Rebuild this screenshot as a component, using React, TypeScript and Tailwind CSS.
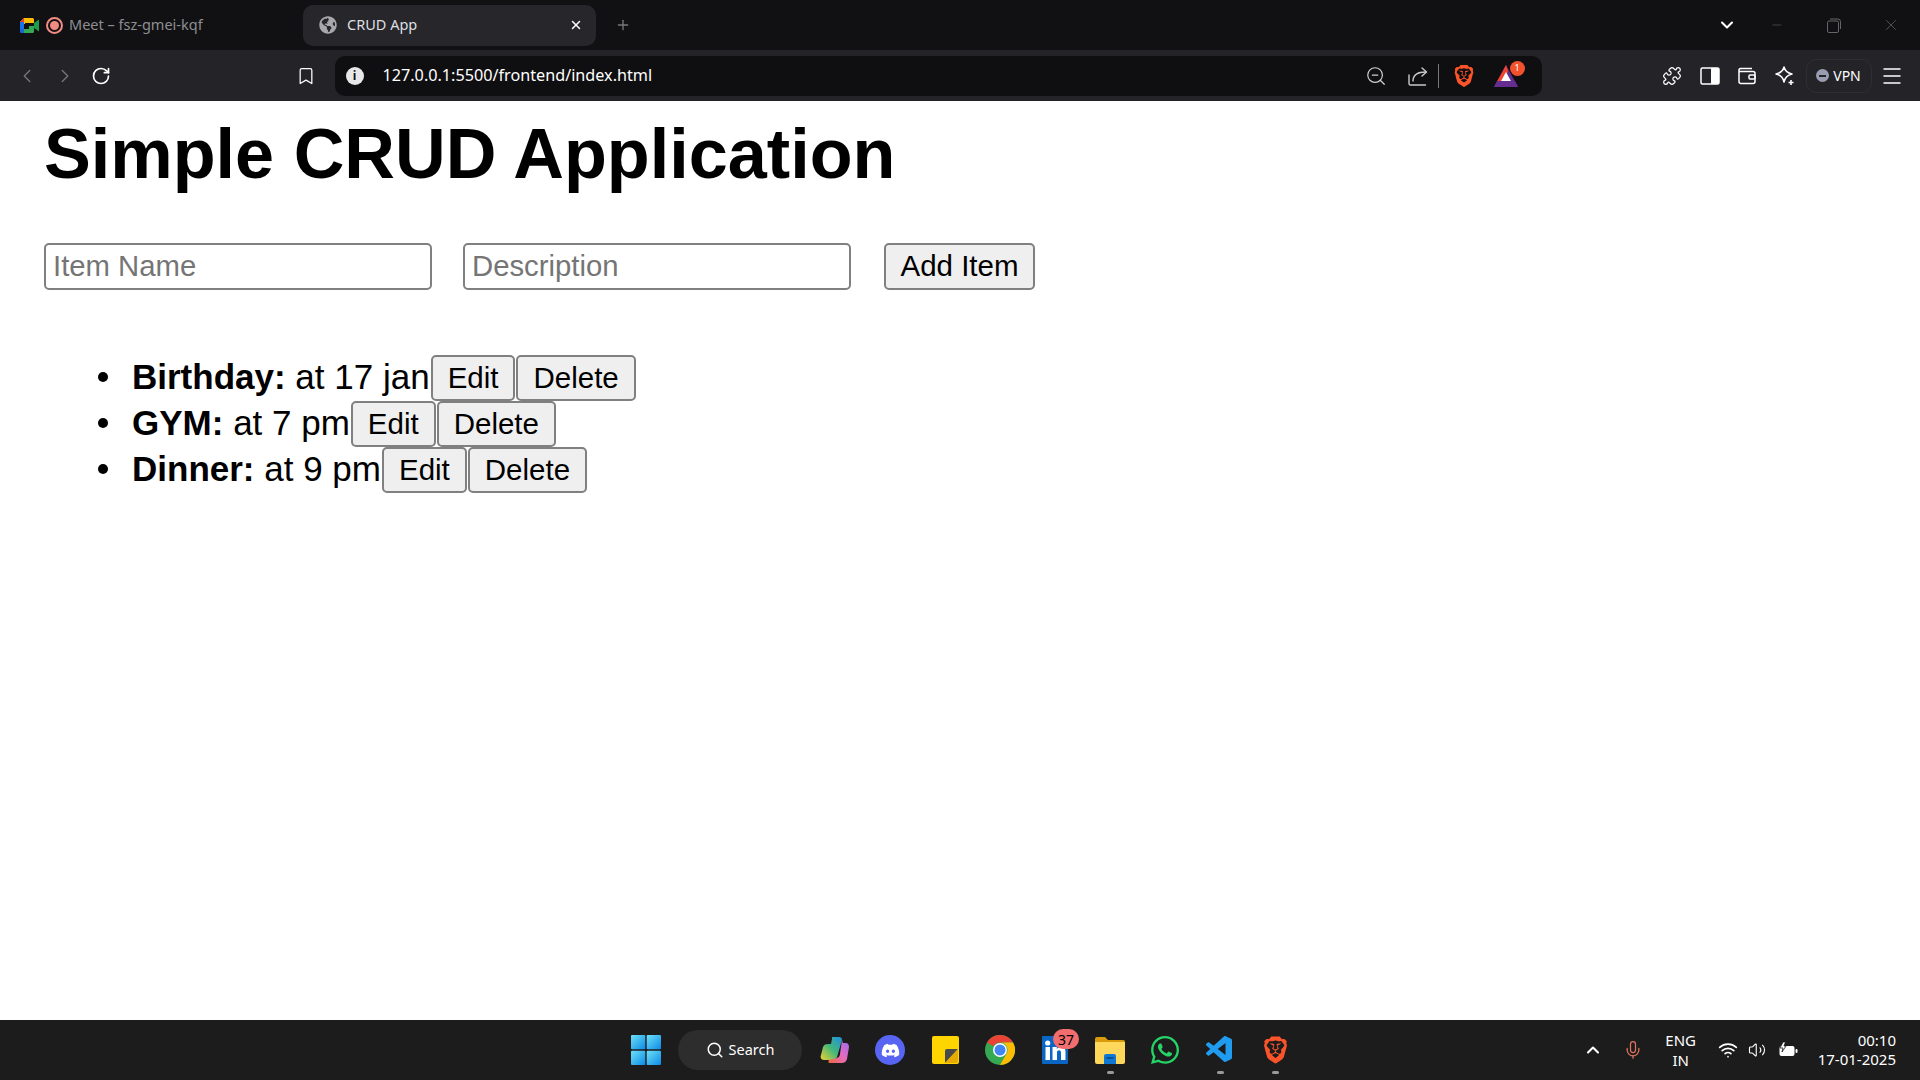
import React from "react";
import { ChevronLeft, ChevronRight, RotateCw, Bookmark, X, Plus, ChevronDown, Minus, ZoomOut, Puzzle, Menu, Search, ChevronUp, Mic, Wifi, Volume2 } from "lucide-react";
import { FaDiscord, FaWhatsapp, FaGlobeAmericas } from "react-icons/fa";
import { SiBrave } from "react-icons/si";
import { VscVscode } from "react-icons/vsc";

const ui = { fontFamily: '"Noto Sans", "Open Sans", sans-serif' };

function MeetIcon() {
  return (
    <svg width="19" height="15" viewBox="0 0 19 15">
      <path d="M4 0h8.500a1.500 1.500 0 0 1 1.500 1.500V5H5v1H0V4z" fill="#fbbc04" />
      <path d="M4 0v4H0z" fill="#ea4335" />
      <path d="M0 4h4v7H0z" fill="#1a73e8" />
      <path d="M0 11h4v4H1.500A1.500 1.500 0 0 1 0 13.500z" fill="#1967d2" />
      <path d="M4 11h5V8h5v5.500a1.500 1.500 0 0 1-1.500 1.500H4z" fill="#34a853" />
      <path d="M14 5l5-3.500v12L14 10z" fill="#1e9e4a" />
    </svg>
  );
}

function Rewards() {
  return (
    <svg width="24" height="24" viewBox="0 0 24 24">
      <path d="M12 1L0 23h24z" fill="#662d91" />
      <path d="M12 1L3 17.500h7L14 7z" fill="#f0442c" />
      <path d="M12 8l5.500 10h-11z" fill="#ffffff" />
      <path d="M0 23l3-6h18l3 6z" fill="#662d91" />
    </svg>
  );
}

function ShareIcon() {
  return (
    <svg width="20" height="20" viewBox="0 0 20 20" fill="none" stroke="#c9c9cc" strokeWidth="1.400" strokeLinecap="round" strokeLinejoin="round">
      <path d="M1 9v8.500a1.500 1.500 0 0 0 1.500 1.500h15" />
      <path d="M5 15c0-6 3.500-9 13-9" />
      <path d="M14 2l4.500 4-4.500 4" />
    </svg>
  );
}

function SidebarIcon() {
  return (
    <svg width="20" height="20" viewBox="0 0 20 20">
      <rect x="1" y="2" width="18" height="16" rx="1.500" fill="none" stroke="#fff" strokeWidth="1.500" />
      <rect x="11" y="2" width="8" height="16" fill="#fff" />
    </svg>
  );
}

function WalletIcon() {
  return (
    <svg width="20" height="20" viewBox="0 0 20 20" fill="none" stroke="#fff" strokeWidth="1.500">
      <path d="M15 2.500H3.500A1.800 1.800 0 0 0 2 4.500v11A2 2 0 0 0 4 17.500h12a2 2 0 0 0 2-2v-8a2 2 0 0 0-2-2H2.500" />
      <rect x="12" y="9" width="6" height="4" rx="1" />
    </svg>
  );
}

function LeoIcon() {
  return (
    <svg width="22" height="22" viewBox="0 0 22 22" fill="none" stroke="#fff" strokeWidth="1.500" strokeLinejoin="round">
      <path d="M10 2c1 4 3.500 6 8 7-4.500 1-7 3-8 8-1-5-3.500-7-8-8 4.500-1 7-3 8-7z" />
      <path d="M17 15v5M14.500 17.500h5" strokeWidth="1.600" />
    </svg>
  );
}

function WinLogo() {
  return (
    <svg width="30" height="30" viewBox="0 0 30 30">
      <defs>
        <linearGradient id="wl" x1="0" y1="0" x2="1" y2="1">
          <stop offset="0" stopColor="#6fe0f5" />
          <stop offset="1" stopColor="#0b8be8" />
        </linearGradient>
      </defs>
      <rect x="0" y="0" width="14.300" height="14.300" rx="1" fill="url(#wl)" />
      <rect x="15.700" y="0" width="14.300" height="14.300" rx="1" fill="url(#wl)" />
      <rect x="0" y="15.700" width="14.300" height="14.300" rx="1" fill="url(#wl)" />
      <rect x="15.700" y="15.700" width="14.300" height="14.300" rx="1" fill="url(#wl)" />
    </svg>
  );
}

function Copilot() {
  return (
    <svg width="30" height="28" viewBox="0 0 30 28">
      <defs>
        <linearGradient id="c1" x1="0" y1="1" x2="1" y2="0">
          <stop offset="0" stopColor="#f2d22e" />
          <stop offset="0.5" stopColor="#42b87a" />
          <stop offset="1" stopColor="#1f8fe0" />
        </linearGradient>
        <linearGradient id="c2" x1="0" y1="1" x2="1" y2="0">
          <stop offset="0" stopColor="#f0683a" />
          <stop offset="0.5" stopColor="#e66bc0" />
          <stop offset="1" stopColor="#9a6cf0" />
        </linearGradient>
      </defs>
      <path d="M12 1h7c2 0 3 1 3 3l-5 17c-1 2-2 3-4 3H4c-3 0-4-3-3-5l2-8c1-2 2-3 5-3h3l1-5c0-1 0-2 0-2z" fill="url(#c1)" />
      <path d="M22 4c1 3 0 0 1 3h3c2 0 3 2 3 4l-2 12c-1 3-3 4-5 4H10c-2 0-2-1-1-3l8-2c2-1 3-2 3-4z" fill="url(#c2)" />
    </svg>
  );
}

function Sticky() {
  return (
    <svg width="27" height="28" viewBox="0 0 27 28">
      <rect width="27" height="28" rx="2" fill="#ffd500" />
      <path d="M26 13H15a2 2 0 0 0-2 2v12z" fill="#4a4a4a" />
      <path d="M26 13v12a2 2 0 0 1-2 2H13z" fill="#e8a900" />
    </svg>
  );
}

function Chrome() {
  return (
    <svg width="30" height="30" viewBox="0 0 30 30">
      <circle cx="15" cy="15" r="15" fill="#34a853" />
      <path d="M15 0a15 15 0 0 1 13 7.500H15a7.500 7.500 0 0 0-6.500 3.750L2 7.500A15 15 0 0 1 15 0z" fill="#ea4335" />
      <path d="M28 7.500A15 15 0 0 1 15 30l6.500-11.250A7.500 7.500 0 0 0 15 7.500z" fill="#fbbc04" />
      <circle cx="15" cy="15" r="7" fill="#fff" />
      <circle cx="15" cy="15" r="5.500" fill="#4285f4" />
    </svg>
  );
}

function Linkedin() {
  return (
    <svg width="26" height="28" viewBox="0 0 26 28">
      <rect width="26" height="28" rx="1" fill="#0a66c2" />
      <rect x="3.500" y="11" width="4.500" height="13" fill="#fff" />
      <circle cx="5.700" cy="7" r="2.600" fill="#fff" />
      <path d="M10.500 11h4.300v2c1-1.500 2.500-2.300 4.300-2.300 3.300 0 4.400 2.200 4.400 5.300v8h-4.500v-7c0-1.700-.5-2.700-1.900-2.700-1.500 0-2.100 1.100-2.100 2.700v7h-4.500z" fill="#fff" />
    </svg>
  );
}

function Folder() {
  return (
    <svg width="30" height="28" viewBox="0 0 30 28">
      <path d="M0 3a2 2 0 0 1 2-2h8l3 3h15a2 2 0 0 1 2 2v4H0z" fill="#d99b0b" />
      <path d="M0 6h30v20a2 2 0 0 1-2 2H2a2 2 0 0 1-2-2z" fill="#ffd75a" />
      <path d="M9 20a2 2 0 0 1 2-2h8a2 2 0 0 1 2 2v8H9z" fill="#0f78d4" />
      <rect x="11.500" y="21" width="7" height="2" fill="#0b4f8c" />
    </svg>
  );
}

function Battery() {
  return (
    <svg width="20" height="16" viewBox="0 0 20 16">
      <rect x="1.500" y="4" width="15" height="10" rx="2" fill="#fff" />
      <rect x="17.500" y="7" width="2" height="4" rx="1" fill="#fff" />
      <path d="M5 0L2 6h3l-1 4 4-6H6l1.500-4z" fill="#fff" stroke="#1c1c1c" strokeWidth="0.800" />
    </svg>
  );
}

function TaskIcon({ children, dot }: { children: React.ReactNode; dot?: boolean }) {
  return (
    <div className="relative flex h-[60px] w-[55px] shrink-0 items-center justify-center">
      {children}
      {dot && <span className="absolute bottom-[6px] h-[3px] w-[7px] rounded-full bg-[#9a9a9a]" />}
    </div>
  );
}

function Row({ label, text }: { label: string; text: string }) {
  return (
    <li className="relative h-[46px] leading-[43px] before:absolute before:-left-[34px] before:top-[17px] before:h-[10px] before:w-[10px] before:rounded-full before:bg-black before:content-['']">
      <strong>{label}</strong> {text}
      <button className="ml-[1px] h-[46px] rounded-[5px] border-2 border-[#808080] bg-[#efefef] px-[15px] align-top text-[29.500px] leading-none">Edit</button>
      <button className="ml-[1px] h-[46px] rounded-[5px] border-2 border-[#808080] bg-[#efefef] px-[15px] align-top text-[29.500px] leading-none">Delete</button>
    </li>
  );
}

export default function App() {
  return (
    <div className="flex h-screen w-full flex-col overflow-hidden bg-white">
      <header style={ui} className="flex h-[50px] shrink-0 items-center bg-[#111113] text-[14.500px] text-[#8e8e91]">
        <div className="flex w-[303px] shrink-0 items-center pl-[20px]">
          <MeetIcon />
          <span className="ml-[7px] flex h-[17px] w-[17px] items-center justify-center rounded-full border-[2px] border-[#f28b82]">
            <span className="h-[9px] w-[9px] rounded-full bg-[#f28b82]" />
          </span>
          <span className="ml-[6px]">Meet – fsz-gmei-kqf</span>
        </div>
        <div className="flex h-[41px] w-[293px] shrink-0 items-center rounded-[10px] bg-[#26262b] pl-[16px] text-[#dedee0]">
          <FaGlobeAmericas className="h-[18px] w-[18px] text-[#a8a8ab]" />
          <span className="ml-[10px]">CRUD App</span>
          <X className="ml-auto mr-[13px] h-[14px] w-[14px] text-white" strokeWidth={2.500} />
        </div>
        <Plus className="ml-[19px] h-[16px] w-[16px] text-[#77777a]" />
        <div className="ml-auto flex items-center">
          <ChevronDown className="h-[20px] w-[20px] text-white" strokeWidth={2.500} />
          <Minus className="ml-[33.500px] h-[14px] w-[14px] text-[#66666a]" strokeWidth={1} />
          <svg className="ml-[43px]" width="14" height="15" viewBox="0 0 14 15" fill="none" stroke="#66666a"><rect x="0.500" y="3" width="11" height="11.500" rx="1.500" /><path d="M3 1h8a2.500 2.500 0 0 1 2.500 2.500V11" /></svg>
          <X className="ml-[41px] mr-[20px] h-[18px] w-[18px] text-[#66666a]" strokeWidth={1} />
        </div>
      </header>

      <nav style={ui} className="flex h-[51px] shrink-0 items-center bg-[#232328]">
        <ChevronLeft className="ml-[16px] h-[22px] w-[22px] text-[#77777a]" strokeWidth={1.500} />
        <ChevronRight className="ml-[16px] h-[22px] w-[22px] text-[#77777a]" strokeWidth={1.500} />
        <RotateCw className="ml-[15px] h-[20px] w-[20px] text-white" strokeWidth={2} />
        <Bookmark className="ml-[184.500px] h-[20px] w-[20px] text-white" strokeWidth={1.500} />
        <div className="ml-[19px] flex h-[40px] w-[1207px] shrink-0 items-center rounded-[10px] bg-[#0f0f11] pl-[11px]">
          <span className="flex h-[18px] w-[18px] items-center justify-center rounded-full bg-[#e8e8ea] text-[12px] font-bold leading-none text-[#0f0f11]">i</span>
          <span className="ml-[19px] text-[16.200px] text-white">127.0.0.1:5500/frontend/index.html</span>
          <div className="ml-auto flex items-center">
            <ZoomOut className="h-[22px] w-[22px] text-[#d0d0d2]" strokeWidth={1.300} />
            <div className="ml-[21px]"><ShareIcon /></div>
            <span className="ml-[10px] h-[24px] w-[1px] bg-[#77777a]" />
            <SiBrave className="ml-[14px] h-[24px] w-[22px] text-[#fb542b]" />
            <div className="relative ml-[19px] mr-[24px] h-[24px] w-[24px]">
              <Rewards />
              <span className="absolute -right-[7px] -top-[3px] flex h-[15px] w-[15px] items-center justify-center rounded-full bg-[#f2512e] text-[9px] text-white">1</span>
            </div>
          </div>
        </div>
        <Puzzle className="ml-[120px] h-[20px] w-[20px] text-white" strokeWidth={1.500} />
        <div className="ml-[18px]"><SidebarIcon /></div>
        <div className="ml-[17px]"><WalletIcon /></div>
        <div className="ml-[17px]"><LeoIcon /></div>
        <div className="ml-[10px] flex h-[34px] w-[66px] items-center justify-center rounded-[10px] border border-[#2e2e33] text-[14px] text-white">
          <span className="relative mr-[4px] h-[13px] w-[13px] rounded-full bg-[#9a9db0]">
            <span className="absolute left-[3px] top-[5.500px] h-[2px] w-[7px] bg-[#232328]" />
          </span>
          VPN
        </div>
        <Menu className="ml-[8px] h-[24px] w-[24px] text-white" strokeWidth={1.500} />
      </nav>

      <main style={{ fontFamily: '"Liberation Sans", Arial, sans-serif' }} className="flex-1 overflow-hidden pl-[44px] text-[35px] text-black">
        <h1 className="mb-[50px] mt-[14px] text-[70.200px] font-bold leading-[78px]">Simple CRUD Application</h1>
        <form className="flex items-center">
          <input placeholder="Item Name" className="h-[47px] w-[388px] rounded-[5px] border-2 border-[#808080] px-[7px] pb-[2px] text-[29.300px] placeholder:text-[#757575]" />
          <input placeholder="Description" className="ml-[31px] h-[47px] w-[388px] rounded-[5px] border-2 border-[#808080] px-[7px] pb-[2px] text-[29.300px] placeholder:text-[#757575]" />
          <button type="button" className="ml-[33px] h-[47px] w-[151px] rounded-[5px] border-2 border-[#808080] bg-[#efefef] pb-[2px] text-[29.500px] leading-none">Add Item</button>
        </form>
        <ul className="mt-[65px] list-none pl-[88px]">
          <Row label="Birthday:" text="at 17 jan" />
          <Row label="GYM:" text="at 7 pm" />
          <Row label="Dinner:" text="at 9 pm" />
        </ul>
      </main>

      <footer style={ui} className="flex h-[60px] shrink-0 items-center bg-[#1c1c1c] pl-[618px] text-white">
        <TaskIcon><WinLogo /></TaskIcon>
        <div className="ml-[5px] flex h-[40px] w-[124px] shrink-0 items-center justify-center rounded-full bg-[#2d2d2d] text-[14.500px]">
          <Search className="mr-[5px] h-[18px] w-[18px]" strokeWidth={2} />
          Search
        </div>
        <div className="ml-[5.500px] flex">
          <TaskIcon><Copilot /></TaskIcon>
          <TaskIcon>
            <span className="flex h-[30px] w-[30px] items-center justify-center rounded-full bg-[#5865f2]"><FaDiscord className="h-[19px] w-[19px] text-white" /></span>
          </TaskIcon>
          <TaskIcon><Sticky /></TaskIcon>
          <TaskIcon><Chrome /></TaskIcon>
          <TaskIcon>
            <Linkedin />
            <span className="absolute left-[25.500px] top-[9px] flex h-[20px] w-[26px] items-center justify-center rounded-full bg-[#f26d6d] text-[14px] text-black">37</span>
          </TaskIcon>
          <TaskIcon dot><Folder /></TaskIcon>
          <TaskIcon><FaWhatsapp className="h-[32px] w-[32px] text-[#25d366]" /></TaskIcon>
          <TaskIcon dot><VscVscode className="h-[32px] w-[32px] text-[#1f9cf0]" /></TaskIcon>
          <TaskIcon dot><SiBrave className="h-[30px] w-[27px] text-[#fb542b]" /></TaskIcon>
        </div>
        <div className="ml-auto flex items-center pr-[24px]">
          <ChevronUp className="h-[20px] w-[20px]" strokeWidth={2.500} />
          <Mic className="ml-[20px] h-[20px] w-[20px] text-[#e0735f]" strokeWidth={1.500} />
          <div className="ml-[20px] flex w-[36px] flex-col items-center text-[15px] leading-[20px]"><span>ENG</span><span>IN</span></div>
          <Wifi className="ml-[19px] h-[20px] w-[20px]" strokeWidth={2} />
          <Volume2 className="ml-[10px] h-[18px] w-[18px]" strokeWidth={1.500} />
          <div className="ml-[12px]"><Battery /></div>
          <div className="ml-[20px] flex flex-col items-end text-[15px] leading-[19px]"><span>00:10</span><span>17-01-2025</span></div>
        </div>
      </footer>
    </div>
  );
}
